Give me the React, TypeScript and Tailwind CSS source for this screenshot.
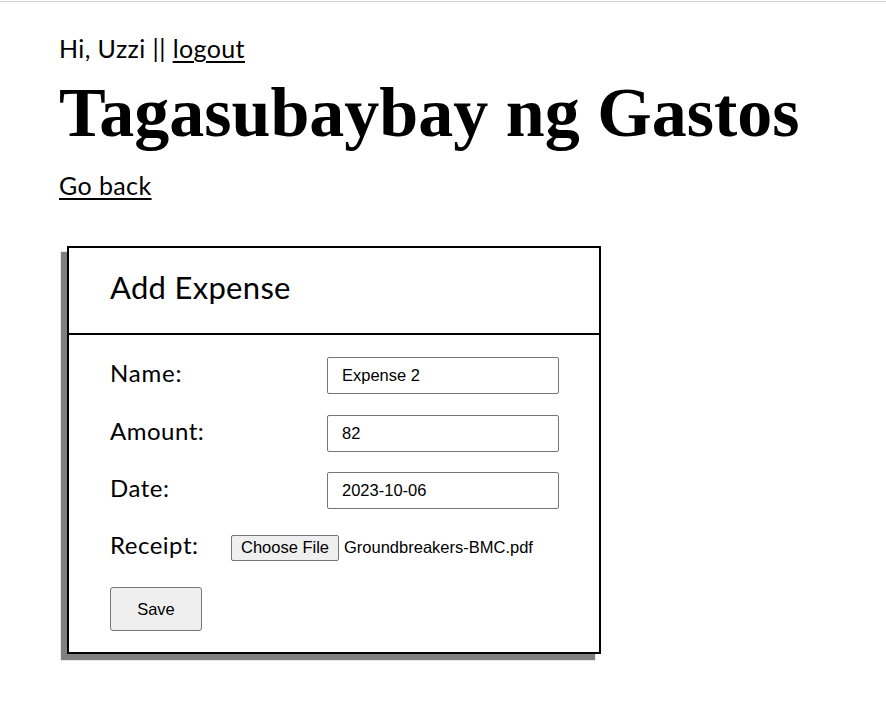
import React from "react";

export default function App() {
  return (
    <div className="min-h-screen bg-white text-black">
      <div className="mt-px h-px bg-[#d4d4d4]" />
      <div className="px-[59px] font-['Lato',sans-serif]">
        <p className="mt-[32px] text-[25px] leading-[28px] tracking-[0.4px]">
          Hi, Uzzi ||{" "}
          <a href="#" className="underline decoration-2 underline-offset-[3px]">
            logout
          </a>
        </p>
        <h1 className="mt-[16px] font-['Liberation_Serif',serif] text-[70px] font-bold leading-[70px]">
          Tagasubaybay ng Gastos
        </h1>
        <div className="mt-[23px] text-[25px] leading-[28px] tracking-[0.4px]">
          <a href="#" className="underline decoration-2 underline-offset-[3px]">
            Go back
          </a>
        </div>

        <div className="ml-[8px] mt-[47px] w-[534px] border-2 border-black shadow-[-6px_6px_1px_#808080]">
          <div className="flex h-[87px] items-start border-b-2 border-black pl-[41px] pt-[21px]">
            <h2 className="text-[31px] leading-[36px] tracking-[0.3px]">Add Expense</h2>
          </div>
          <div className="flex flex-col pb-[21px] pl-[41px] pr-[40px] pt-[22px]">
            <div className="flex h-[37px] items-center justify-between">
              <label className="pb-[5px] text-[24px] leading-[28px] tracking-[0.8px]">Name:</label>
              <input
                defaultValue="Expense 2"
                className="h-[37px] w-[232px] rounded-[2px] border border-[#767676] px-[14px] font-['Liberation_Sans',Arial,sans-serif] text-[16.5px] outline-none"
              />
            </div>
            <div className="mt-[21px] flex h-[37px] items-center justify-between">
              <label className="pb-[5px] text-[24px] leading-[28px] tracking-[0.5px]">Amount:</label>
              <input
                defaultValue="82"
                className="h-[37px] w-[232px] rounded-[2px] border border-[#767676] px-[14px] font-['Liberation_Sans',Arial,sans-serif] text-[16.5px] outline-none"
              />
            </div>
            <div className="mt-[20px] flex h-[37px] items-center justify-between">
              <label className="pb-[5px] text-[24px] leading-[28px] tracking-[0.5px]">Date:</label>
              <input
                defaultValue="2023-10-06"
                className="h-[37px] w-[232px] rounded-[2px] border border-[#767676] px-[14px] font-['Liberation_Sans',Arial,sans-serif] text-[16.5px] outline-none"
              />
            </div>
            <div className="mt-[20px] flex h-[37px] items-center">
              <label className="w-[121px] pb-[5px] text-[24px] leading-[28px] tracking-[0.5px]">Receipt:</label>
              <div className="flex items-center font-['Liberation_Sans',Arial,sans-serif] text-[16.5px]">
                <button className="flex h-[26px] w-[108px] items-center justify-center rounded-[2px] border border-[#767676] bg-[#efefef]">
                  Choose File
                </button>
                <span className="ml-[5px]">Groundbreakers-BMC.pdf</span>
              </div>
            </div>
            <div className="mt-[21px]">
              <button className="h-[44px] w-[92px] rounded-[3px] border border-[#767676] bg-[#efefef] font-['Liberation_Sans',Arial,sans-serif] text-[16.5px]">
                Save
              </button>
            </div>
          </div>
        </div>
      </div>
    </div>
  );
}
